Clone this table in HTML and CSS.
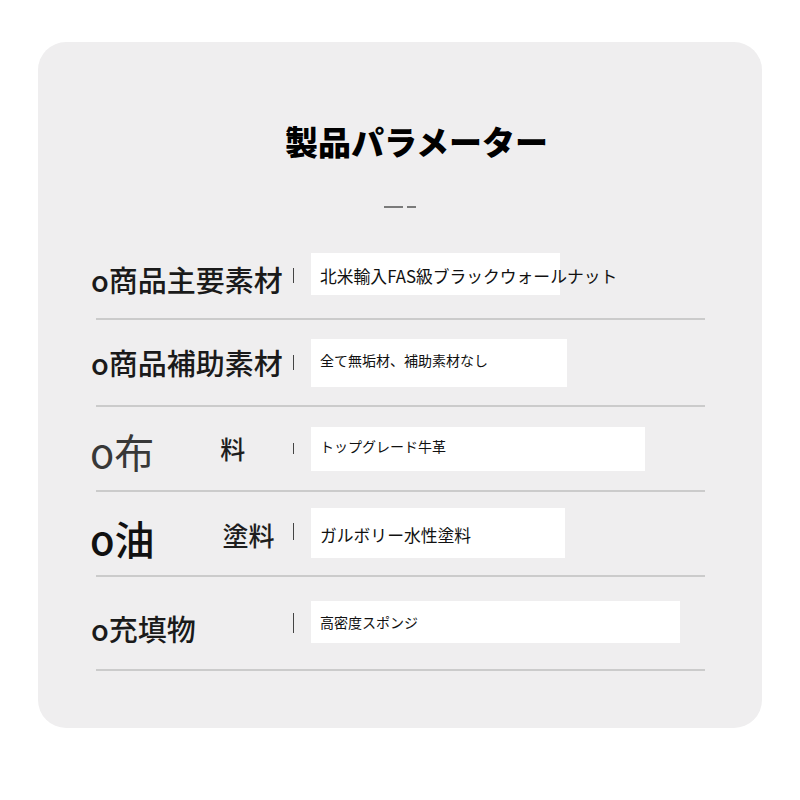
FILE: index.html
```html
<!DOCTYPE html>
<html lang="ja">
<head>
    <meta charset="UTF-8">
    <meta name="viewport" content="width=device-width, initial-scale=1.0">
    <title>製品パラメーター</title>
    <link rel="stylesheet" href="styles.css">
</head>
<body>
    <div class="card">
        <h1 class="title">製品パラメーター</h1>
        <div class="dash"><span class="dash-long"></span><span class="dash-short"></span></div>

        <div class="params">
            <div class="row row-1">
                <div class="label"><span class="label-main">o商品主要素材</span></div>
                <span class="sep"></span>
                <div class="value">北米輸入FAS級ブラックウォールナット</div>
            </div>
            <div class="row row-2">
                <div class="label"><span class="label-main">o商品補助素材</span></div>
                <span class="sep"></span>
                <div class="value">全て無垢材、補助素材なし</div>
            </div>
            <div class="row row-3">
                <div class="label"><span class="label-big">o布</span><span class="label-sub">料</span></div>
                <span class="sep"></span>
                <div class="value">トップグレード牛革</div>
            </div>
            <div class="row row-4">
                <div class="label"><span class="label-big">o油</span><span class="label-sub">塗料</span></div>
                <span class="sep"></span>
                <div class="value">ガルボリー水性塗料</div>
            </div>
            <div class="row row-5">
                <div class="label"><span class="label-main">o充填物</span></div>
                <span class="sep"></span>
                <div class="value">高密度スポンジ</div>
            </div>
        </div>
    </div>
</body>
</html>
```

FILE: styles.css
```css
body { margin: 0; background: #fff; font-family: "Noto Sans CJK JP", "Noto Sans", sans-serif; color: #1e1e1e; }
.card { margin: 42px 38px 0; height: 686px; box-sizing: border-box; padding-top: 79px; background: #efeeef; border-radius: 28px; }
.title { margin: 0; padding-left: 33px; text-align: center; font-size: 33px; line-height: 40px; font-weight: 900; color: #000; }
.dash { display: flex; justify-content: center; gap: 4px; margin-top: 45px; height: 2px; }
.dash-long { width: 19px; background: #7a7a7a; }
.dash-short { width: 9px; background: #7a7a7a; }

.params { margin: 24px 0 0 58px; width: 609px; }
.row { display: flex; align-items: center; border-bottom: 2px solid #cbcbcb; }
.row-1 { height: 86px; }
.row-2 { height: 85px; }
.row-3, .row-4 { height: 83px; }
.row-5 { height: 92px; }

.label { flex: none; display: flex; align-items: center; width: 205px; margin-left: -8px; white-space: nowrap; }
.label-main { padding-left: 3px; font-size: 29px; font-weight: 500; line-height: 1; color: #1a1a1a; }
.row-1 .label-main { margin-top: 8px; }
.row-5 .label-main { margin-top: 10px; }
.label-big { padding-left: 2px; font-size: 40px; line-height: 1; }
.row-3 .label-big { color: #383838; margin-top: 4px; }
.row-4 .label-big { color: #111; font-weight: 500; margin-top: 8px; }
.label-sub { font-size: 26px; font-weight: 500; line-height: 1; }
.row-3 .label-sub { margin-left: 66px; font-size: 25px; }
.row-4 .label-sub { margin-left: 68px; margin-top: 2px; }

.sep { flex: none; width: 1px; height: 15px; background: #444; }
.row-3 .sep { height: 11px; }
.row-4 .sep { height: 17px; margin-top: -4px; }
.row-5 .sep { height: 20px; }

.value { flex: none; display: flex; align-items: center; box-sizing: border-box; margin-left: 17px; padding-left: 9px; background: #fff; white-space: nowrap; font-size: 14px; color: #111; }
.row-1 .value { width: 249px; height: 42px; font-size: 16.8px; margin-top: -2px; padding-top: 4px; }
.row-2 .value { width: 256px; height: 48px; padding-bottom: 6px; }
.row-3 .value { width: 334px; height: 44px; padding-bottom: 5px; }
.row-4 .value { width: 254px; height: 50px; font-size: 16.8px; margin-top: -2px; padding-top: 4px; }
.row-5 .value { width: 369px; height: 42px; margin-top: -2px; }
```
